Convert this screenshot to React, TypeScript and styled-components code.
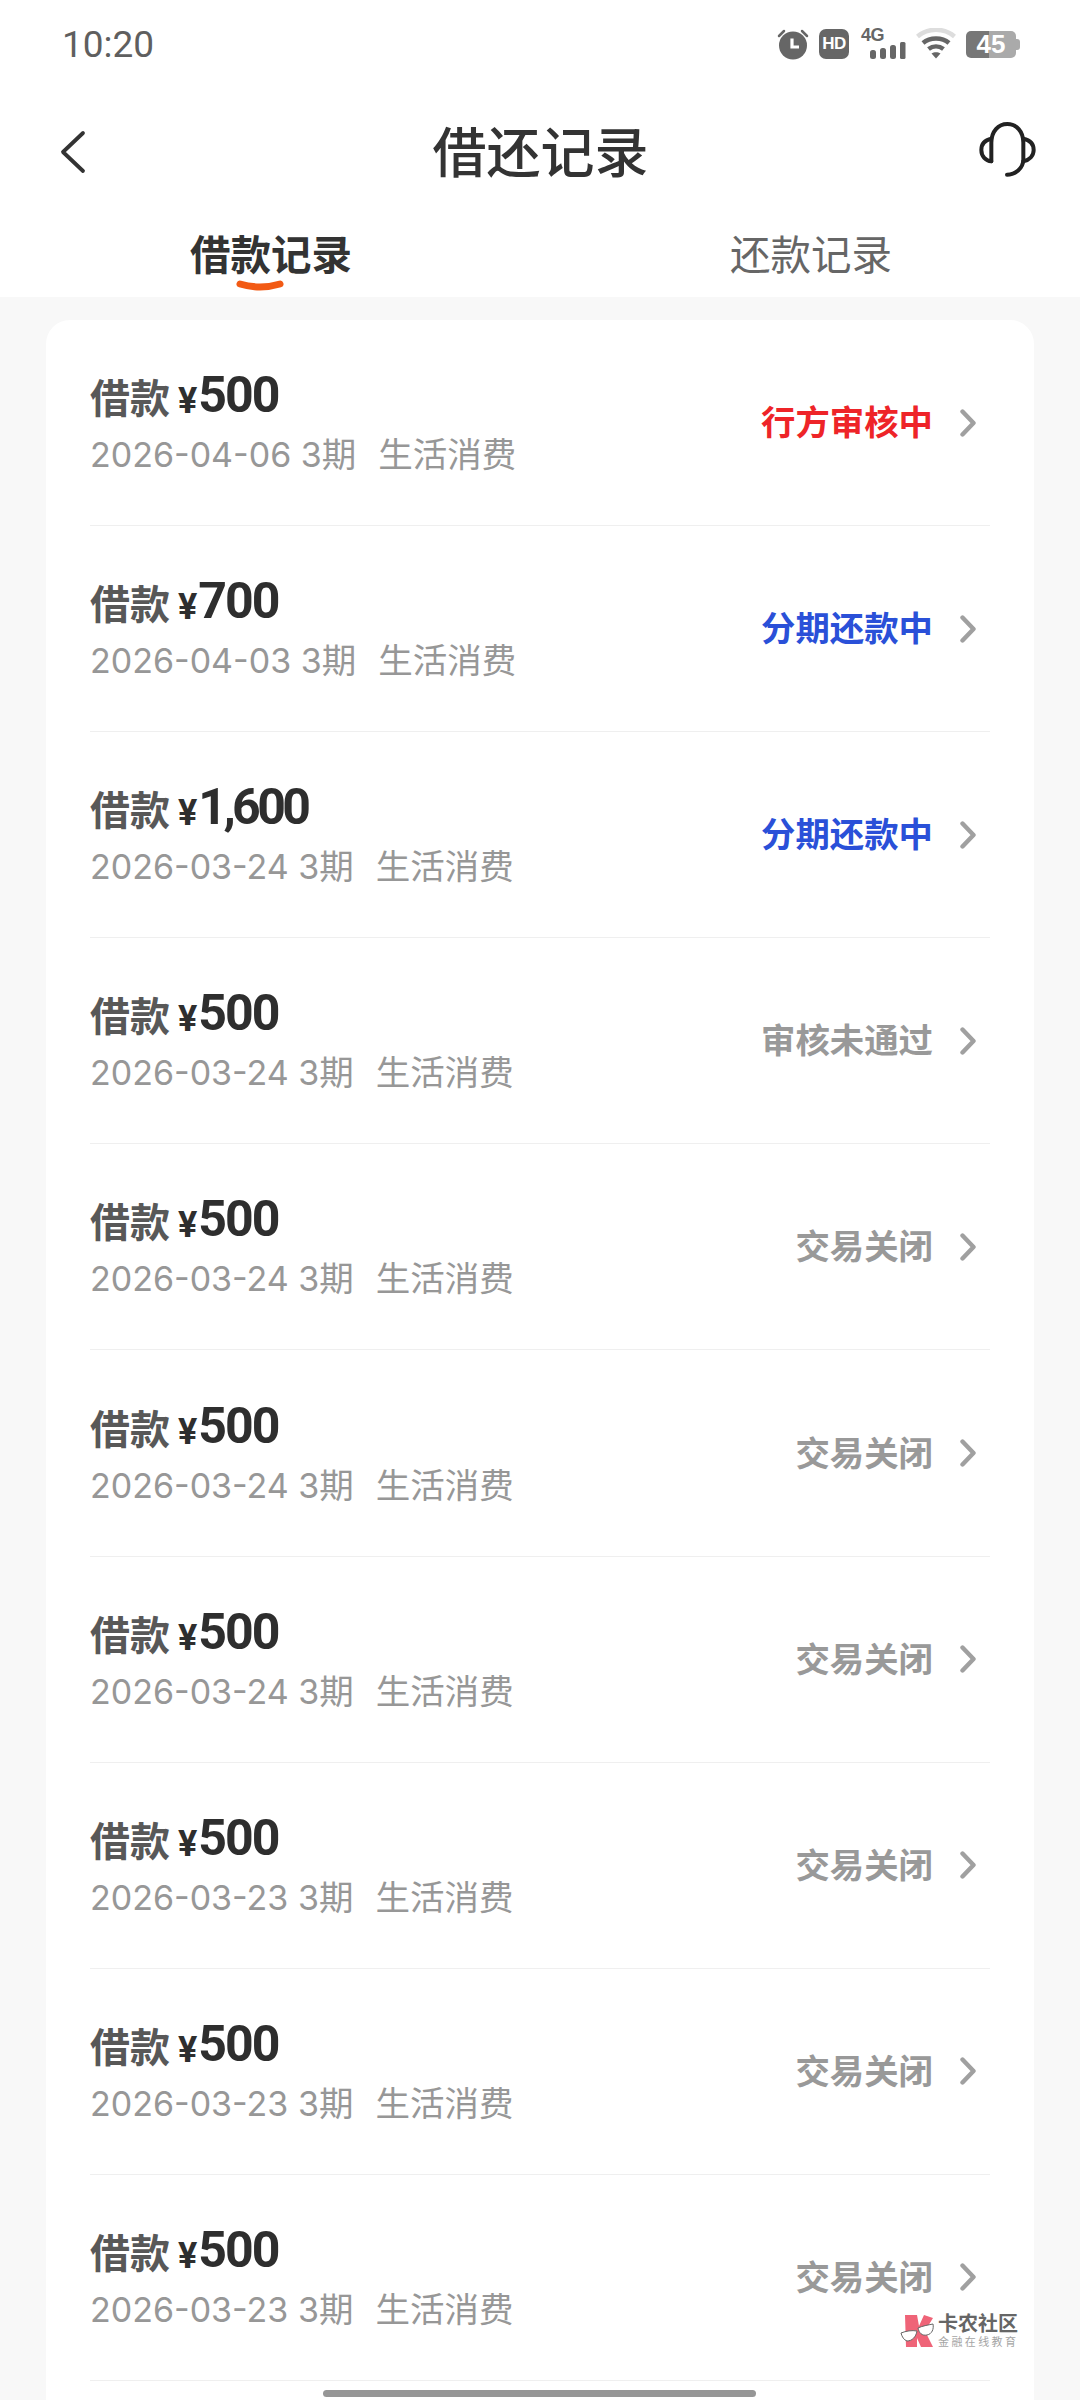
import React from "react";
import styled, { createGlobalStyle } from "styled-components";

const CJK = '"Noto Sans CJK SC", sans-serif';

const Global = createGlobalStyle`
  html, body { margin: 0; padding: 0; background: #f8f8f8; }
  * { box-sizing: border-box; }
`;

const Screen = styled.div`
  position: relative;
  width: 1080px;
  height: 2400px;
  overflow: hidden;
  background: #f8f8f8;
  font-family: ${CJK};
`;

const Header = styled.header`
  background: #fff;
  height: 297px;
  display: flex;
  flex-direction: column;
`;

const StatusBar = styled.div`
  height: 86px;
  display: flex;
  align-items: center;
  justify-content: space-between;
  padding: 2px 60px 0 62px;
`;

const Time = styled.div`
  font-family: Roboto, sans-serif;
  font-size: 37px;
  color: #5f5f5f;
  line-height: 1;
`;

const StatusIcons = styled.div`
  display: flex;
  align-items: center;
  gap: 10px;
`;

const HdBadge = styled.div`
  width: 30px;
  height: 30px;
  border-radius: 7px;
  background: #666;
  color: #fff;
  font: 700 17px/30px "Liberation Sans", sans-serif;
  letter-spacing: -0.5px;
  text-align: center;
`;

const Network = styled.div`
  position: relative;
  width: 45px;
  height: 30px;
  margin-left: 2px;
`;

const NetworkLabel = styled.span`
  position: absolute;
  left: 0;
  top: -3px;
  font: 700 18px/18px "Liberation Sans", sans-serif;
  letter-spacing: -0.5px;
  color: #666;
`;

const Battery = styled.div`
  width: 50px;
  height: 27px;
  margin-right: 4px;
  border-radius: 5px;
  background: linear-gradient(90deg, #777 0 46%, #aaa 46% 100%);
  color: #fff;
  font: 700 26px/27px "Liberation Sans", sans-serif;
  text-align: center;
  position: relative;
  &::after {
    content: "";
    position: absolute;
    right: -4px;
    top: 8px;
    width: 4px;
    height: 11px;
    border-radius: 0 3px 3px 0;
    background: #aaa;
  }
`;

const NavBar = styled.div`
  height: 132px;
  display: grid;
  grid-template-columns: 1fr auto 1fr;
  align-items: center;
  padding: 0 44px 0 45px;
`;

const NavLeft = styled.div`
  display: flex;
  padding-left: 15px;
`;

const NavTitle = styled.h1`
  margin: 0;
  font-size: 54px;
  font-weight: 500;
  color: #333;
  line-height: 1;
  padding-bottom: 4px;
`;

const NavRight = styled.div`
  display: flex;
  justify-content: flex-end;
  padding-bottom: 5px;
`;

const Tabs = styled.nav`
  display: flex;
  padding: 13px 0 0 190px;
  gap: 378px;
  height: 79px;
  align-items: flex-start;
`;

const Tab = styled.div<{ $active?: boolean }>`
  position: relative;
  font-size: 40.5px;
  line-height: 44px;
  font-weight: ${(p) => (p.$active ? 700 : 400)};
  color: ${(p) => (p.$active ? "#333" : "#666")};
`;

const TabMark = styled.svg`
  position: absolute;
  left: 46px;
  top: 49px;
`;

const Card = styled.main`
  margin: 23px 46px 0;
  background: #fff;
  border-radius: 24px 24px 0 0;
  padding: 0 44px 60px;
`;

const Row = styled.div`
  height: 206.1px;
  border-bottom: 1.5px solid #efefef;
  display: flex;
  align-items: center;
  justify-content: space-between;
`;

const RowText = styled.div`
  display: flex;
  flex-direction: column;
  gap: 7px;
  margin-top: -1px;
`;

const Title = styled.div`
  display: flex;
  align-items: baseline;
  height: 56px;
`;

const TitleLabel = styled.span`
  font-size: 40px;
  line-height: 56px;
  font-weight: 700;
  color: #585858;
  margin-right: 8px;
`;

const Currency = styled.span`
  font: 700 36px/56px Roboto, sans-serif;
  color: #2e2e2e;
  margin-right: 1px;
`;

const Amount = styled.span<{ $tight: boolean }>`
  font: 700 50px/56px Roboto, sans-serif;
  letter-spacing: ${(p) => (p.$tight ? "-3.6px" : "-2px")};
  color: #2e2e2e;
  position: relative;
  top: -1px;
`;

const Meta = styled.div`
  display: flex;
  font-size: 34.5px;
  line-height: 42px;
  color: #979797;
  gap: 22px;
`;

const DateText = styled.span`
  font-family: Inter, ${CJK};
  font-size: 34px;
`;

const RowStatus = styled.div`
  display: flex;
  align-items: center;
  gap: 27px;
  padding-right: 14px;
`;

const StatusText = styled.span<{ $color: string }>`
  font-size: 34.4px;
  line-height: 40px;
  font-weight: 700;
  color: ${(p) => p.$color};
  padding-bottom: 5px;
`;

const HomeBar = styled.div`
  position: absolute;
  left: 323px;
  top: 2390px;
  width: 433px;
  height: 7px;
  border-radius: 4px;
  background: #969696;
`;

const Watermark = styled.div`
  position: absolute;
  left: 900px;
  top: 2313px;
  display: flex;
  align-items: center;
  gap: 4px;
`;

const WatermarkText = styled.div`
  display: flex;
  flex-direction: column;
  gap: 2px;
`;

const WatermarkName = styled.span`
  font-size: 20px;
  line-height: 20px;
  font-weight: 700;
  color: #666;
`;

const WatermarkSlogan = styled.span`
  font-size: 11px;
  line-height: 13px;
  letter-spacing: 2.4px;
  color: #a5a5a5;
  white-space: nowrap;
`;

const Chevron = () => (
  <svg width="16" height="28" viewBox="0 0 16 28" fill="none">
    <path d="M2.5 2.5 L13.5 14 L2.5 25.5" stroke="#a0a0a0" strokeWidth="4.4" strokeLinecap="round" strokeLinejoin="round" />
  </svg>
);

const ClockIcon = () => (
  <svg width="32" height="32" viewBox="0 0 32 32">
    <circle cx="16" cy="17.5" r="14" fill="#666" />
    <path d="M2 8 L7 3 M30 8 L25 3" stroke="#666" strokeWidth="2.5" strokeLinecap="round" />
    <path d="M15 10.5 V19 H22" stroke="#fff" strokeWidth="3.2" fill="none" />
  </svg>
);

const SignalBars = () => (
  <svg width="36" height="17" viewBox="0 0 36 17" style={{ position: "absolute", right: 0, bottom: 0 }}>
    <rect x="0" y="8" width="6" height="9" rx="2.5" fill="#666" />
    <rect x="10" y="6" width="6" height="11" rx="2.5" fill="#666" />
    <rect x="20" y="3" width="6" height="14" rx="2.5" fill="#666" />
    <rect x="30" y="0" width="5.5" height="17" rx="1.5" fill="#666" />
  </svg>
);

const WifiIcon = () => (
  <svg width="40" height="32" viewBox="0 0 40 32" fill="none">
    <path d="M1.5 8.5 C12 -0.5 28 -0.5 38.5 8.5" stroke="#ddd" strokeWidth="4.5" />
    <path d="M7 15 C14 9 26 9 33 15" stroke="#666" strokeWidth="4.5" />
    <path d="M12.5 21 C17 17.5 23 17.5 27.5 21" stroke="#666" strokeWidth="4.5" />
    <path d="M15.5 25.5 C18 23.7 22 23.7 24.5 25.5 L20 30.5 Z" fill="#666" />
  </svg>
);

const BackIcon = () => (
  <svg width="26" height="44" viewBox="0 0 26 44" fill="none">
    <path d="M23 3 L3 22 L23 41" stroke="#333" strokeWidth="3.8" strokeLinecap="round" strokeLinejoin="round" />
  </svg>
);

const HeadsetIcon = () => (
  <svg width="57" height="55" viewBox="0 0 171 165" fill="none">
    <path d="M37 118 V62 C37 28 58 6 85 6 C112 6 133 28 133 62 V112 C133 140 108 158 84 158" stroke="#222" strokeWidth="12" strokeLinecap="round" />
    <path d="M37 50 C16 54 7 67 7 84 C7 103 20 116 37 118" stroke="#222" strokeWidth="12" strokeLinecap="round" />
    <path d="M133 50 C154 54 164 67 164 84 C164 101 151 114 133 118" stroke="#222" strokeWidth="12" strokeLinecap="round" />
  </svg>
);

const LogoMark = () => (
  <svg width="34" height="34" viewBox="0 0 34 34">
    <path d="M5 1 H17 L19 12 L24 1 L33 4 L25 17 L33 33 L21 33 L17 24 V33 H6 Z" fill="#ef6478" />
    <path d="M1 19 C6 17 12 16 17 17 C16 23 12 27 7 27 C4 26 2 23 1 19 Z" fill="#fff" stroke="#666" strokeWidth="1" />
    <path d="M18 14 C22 12 28 11 33 10 C34 15 32 20 27 21 C22 22 19 19 18 14 Z" fill="#fff" stroke="#666" strokeWidth="1" />
  </svg>
);

const RED = "#ee2428";
const BLUE = "#2a50d8";
const GRAY = "#999999";

const rows = [
  { amount: "500", date: "2026-04-06", status: "行方审核中", color: RED },
  { amount: "700", date: "2026-04-03", status: "分期还款中", color: BLUE },
  { amount: "1,600", date: "2026-03-24", status: "分期还款中", color: BLUE },
  { amount: "500", date: "2026-03-24", status: "审核未通过", color: GRAY },
  { amount: "500", date: "2026-03-24", status: "交易关闭", color: GRAY },
  { amount: "500", date: "2026-03-24", status: "交易关闭", color: GRAY },
  { amount: "500", date: "2026-03-24", status: "交易关闭", color: GRAY },
  { amount: "500", date: "2026-03-23", status: "交易关闭", color: GRAY },
  { amount: "500", date: "2026-03-23", status: "交易关闭", color: GRAY },
  { amount: "500", date: "2026-03-23", status: "交易关闭", color: GRAY },
];

export default function App() {
  return (
    <Screen>
      <Global />
      <Header>
        <StatusBar>
          <Time>10:20</Time>
          <StatusIcons>
            <ClockIcon />
            <HdBadge>HD</HdBadge>
            <Network>
              <NetworkLabel>4G</NetworkLabel>
              <SignalBars />
            </Network>
            <WifiIcon />
            <Battery>45</Battery>
          </StatusIcons>
        </StatusBar>
        <NavBar>
          <NavLeft>
            <BackIcon />
          </NavLeft>
          <NavTitle>借还记录</NavTitle>
          <NavRight>
            <HeadsetIcon />
          </NavRight>
        </NavBar>
        <Tabs>
          <Tab $active>
            借款记录
            <TabMark width="48" height="14" viewBox="0 0 48 14" fill="none">
              <path d="M4 4 Q24 10 44 4" stroke="#f25a14" strokeWidth="7" strokeLinecap="round" />
            </TabMark>
          </Tab>
          <Tab>还款记录</Tab>
        </Tabs>
      </Header>
      <Card>
        {rows.map((r, i) => (
          <Row key={i}>
            <RowText>
              <Title>
                <TitleLabel>借款</TitleLabel>
                <Currency>¥</Currency>
                <Amount $tight={r.amount.length > 3}>{r.amount}</Amount>
              </Title>
              <Meta>
                <span>
                  <DateText>{r.date} 3</DateText>期
                </span>
                <span>生活消费</span>
              </Meta>
            </RowText>
            <RowStatus>
              <StatusText $color={r.color}>{r.status}</StatusText>
              <Chevron />
            </RowStatus>
          </Row>
        ))}
      </Card>
      <Watermark>
        <LogoMark />
        <WatermarkText>
          <WatermarkName>卡农社区</WatermarkName>
          <WatermarkSlogan>金融在线教育</WatermarkSlogan>
        </WatermarkText>
      </Watermark>
      <HomeBar />
    </Screen>
  );
}
